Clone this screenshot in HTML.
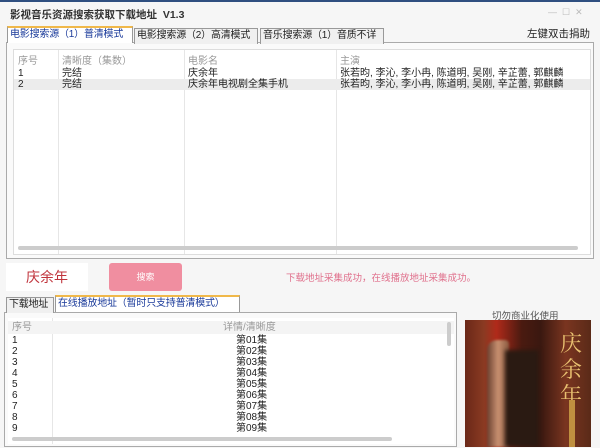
<!DOCTYPE html>
<html><head><meta charset="utf-8"><style>
*{margin:0;padding:0;box-sizing:border-box}
body{width:600px;height:448px;overflow:hidden;background:#f6f6f6;font-family:"Liberation Sans","Noto Sans CJK SC",sans-serif;font-size:10px;color:#222;position:relative}
.a{position:absolute;white-space:nowrap}
.tab{position:absolute;height:16px;border:1px solid #999;border-bottom:none;background:#f0f0f0;font-size:10px;line-height:14px;padding:0 2px;white-space:nowrap;overflow:hidden;letter-spacing:-0.2px}
.tab.on{background:#fff;border-top:2px solid #f0b84a;color:#1a3a9a;height:17px}
.row{position:absolute;left:0;right:0;height:11px;line-height:11px}
.vl{position:absolute;top:0;bottom:0;width:1px;background:#e6e6e6}
.hd{color:#999}
</style></head><body>
<div class="a" style="left:0;top:0;width:600px;height:2px;background:#2f4f80"></div>
<div class="a" style="left:10px;top:7px;font-size:10.5px;font-weight:bold;color:#333">影视音乐资源搜索获取下载地址&nbsp; V1.3</div>
<div class="a" style="left:548px;top:7px;color:#bbb;font-size:9px">—&nbsp; ☐ &nbsp;✕</div>
<div class="a" style="left:527px;top:26px;font-size:10.5px">左键双击捐助</div>

<div class="a" style="left:6px;top:42px;width:588px;height:217px;border:1px solid #aaa;background:#fafafa"></div>
<div class="tab on" style="left:7px;top:26px;width:126px">电影搜索源（1）普清模式</div>
<div class="tab" style="left:134px;top:28px;width:124px">电影搜索源（2）高清模式</div>
<div class="tab" style="left:260px;top:28px;width:124px">音乐搜索源（1）音质不详</div>
<div class="a" style="left:13px;top:49px;width:578px;height:206px;background:#fff;border:1px solid #ddd;overflow:hidden">
 <div class="vl" style="left:44px"></div><div class="vl" style="left:170px"></div><div class="vl" style="left:322px"></div>
 <div class="row hd" style="top:5px;height:13px;line-height:13px"><span class="a" style="left:4px">序号</span><span class="a" style="left:48px">清晰度（集数）</span><span class="a" style="left:174px">电影名</span><span class="a" style="left:326px">主演</span></div>
 <div class="row" style="top:18px"><span class="a" style="left:4px">1</span><span class="a" style="left:48px">完结</span><span class="a" style="left:174px">庆余年</span><span class="a" style="left:326px">张若昀, 李沁, 李小冉, 陈道明, 吴刚, 辛芷蕾, 郭麒麟</span></div>
 <div class="row" style="top:29px;background:#ececec"><span class="a" style="left:4px">2</span><span class="a" style="left:48px">完结</span><span class="a" style="left:174px">庆余年电视剧全集手机</span><span class="a" style="left:326px">张若昀, 李沁, 李小冉, 陈道明, 吴刚, 辛芷蕾, 郭麒麟</span></div>
 <div class="a" style="left:4px;top:196px;width:560px;height:4px;background:#ccc;border-radius:2px"></div>
</div>

<div class="a" style="left:6px;top:263px;width:82px;height:28px;background:#fff;color:#c0343c;font-size:14px;line-height:28px;text-align:center">庆余年</div>
<div class="a" style="left:109px;top:263px;width:73px;height:28px;background:#f08ea0;border-radius:3px;color:#fff;font-size:9px;line-height:28px;text-align:center">搜索</div>
<div class="a" style="left:286px;top:270px;color:#e0708c;font-size:9.5px">下载地址采集成功，在线播放地址采集成功。</div>

<div class="a" style="left:4px;top:312px;width:453px;height:135px;border:1px solid #aaa;background:#fafafa"></div>
<div class="tab" style="left:6px;top:297px;width:48px">下载地址</div>
<div class="tab on" style="left:55px;top:295px;width:185px">在线播放地址（暂时只支持普清模式）</div>
<div class="a" style="left:8px;top:318px;width:446px;height:126px;background:#fff;overflow:hidden">
 <div class="vl" style="left:44px"></div>
 <div class="row hd" style="top:3px;height:13px;line-height:13px;background:#f4f4f4"><span class="a" style="left:4px">序号</span><span class="a" style="left:215px">详情/清晰度</span></div>
 <div class="row" style="top:17px"><span class="a" style="left:4px">1</span><span class="a" style="left:228px">第01集</span></div>
 <div class="row" style="top:28px"><span class="a" style="left:4px">2</span><span class="a" style="left:228px">第02集</span></div>
 <div class="row" style="top:39px"><span class="a" style="left:4px">3</span><span class="a" style="left:228px">第03集</span></div>
 <div class="row" style="top:50px"><span class="a" style="left:4px">4</span><span class="a" style="left:228px">第04集</span></div>
 <div class="row" style="top:61px"><span class="a" style="left:4px">5</span><span class="a" style="left:228px">第05集</span></div>
 <div class="row" style="top:72px"><span class="a" style="left:4px">6</span><span class="a" style="left:228px">第06集</span></div>
 <div class="row" style="top:83px"><span class="a" style="left:4px">7</span><span class="a" style="left:228px">第07集</span></div>
 <div class="row" style="top:94px"><span class="a" style="left:4px">8</span><span class="a" style="left:228px">第08集</span></div>
 <div class="row" style="top:105px"><span class="a" style="left:4px">9</span><span class="a" style="left:228px">第09集</span></div>
 <div class="a" style="left:439px;top:4px;width:4px;height:24px;background:#ccc;border-radius:2px"></div>
 <div class="a" style="left:4px;top:119px;width:380px;height:4px;background:#ccc;border-radius:2px"></div>
</div>

<div class="a" style="left:492px;top:308px;color:#555;font-size:9.5px">切勿商业化使用</div>
<div class="a" style="left:465px;top:320px;width:126px;height:127px;background:linear-gradient(90deg,#6a2818 0%,#8a3a22 15%,#b02a1a 25%,#4a1a10 45%,#3a1810 60%,#7a3520 80%,#5a2a18 100%);overflow:hidden">
 <div class="a" style="left:22px;top:20px;width:22px;height:107px;background:linear-gradient(90deg,#6a4030,#c89070,#8a5a40);border-radius:10px 4px 0 0;filter:blur(1px)"></div>
 <div class="a" style="left:40px;top:30px;width:34px;height:97px;background:#2a1a12;filter:blur(2px)"></div>
 <div class="a" style="left:95px;top:10px;color:#e8c070;font-size:22px;font-family:'Noto Serif CJK SC',serif;line-height:26px;white-space:normal;width:26px">庆余年</div>
 <div class="a" style="left:104px;top:80px;width:6px;height:47px;background:#c09040"></div>
</div>
</body></html>
